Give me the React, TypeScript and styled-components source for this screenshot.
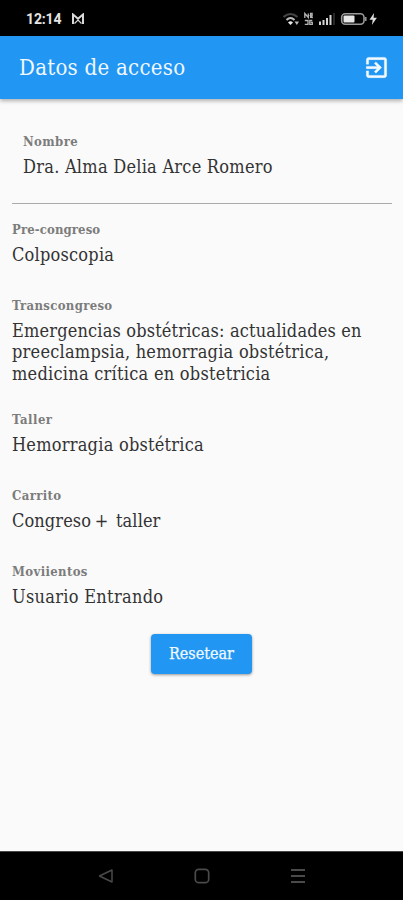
import React from "react";
import styled, { createGlobalStyle } from "styled-components";

const GlobalStyle = createGlobalStyle`
  *, *::before, *::after { box-sizing: border-box; }
  body { margin: 0; background: #fafafa; }
`;

const serif = `"DejaVu Serif Condensed", "DejaVu Serif", serif`;

const Screen = styled.div`
  display: flex;
  flex-direction: column;
  height: 900px;
  overflow: hidden;
  background: #fafafa;
  color: #333;
  font-family: ${serif};
  font-stretch: condensed;
`;

const StatusBar = styled.div`
  display: flex;
  align-items: center;
  justify-content: space-between;
  flex: 0 0 36px;
  padding: 1px 24px 0 26px;
  background: #000;
  color: #e4e4e4;
`;

const Cluster = styled.div<{ $gap: number }>`
  display: flex;
  align-items: center;
  gap: ${(p) => p.$gap}px;
`;

const Clock = styled.span`
  font: 700 14px/18px Roboto, sans-serif;
  letter-spacing: -0.15px;
`;

const AppBar = styled.header`
  display: flex;
  align-items: center;
  justify-content: space-between;
  flex: 0 0 63px;
  padding: 0 13px 0 19px;
  background: #2196f3;
  box-shadow: 0 2px 4px rgba(0, 0, 0, 0.3);
  color: #f1f8ff;
`;

const Title = styled.h1`
  margin: 0;
  padding-top: 1px;
  font-size: 22px;
  font-weight: 400;
  line-height: 28px;
  letter-spacing: 0.27px;
`;

const Content = styled.main`
  display: flex;
  flex-direction: column;
  flex: 1;
  padding: 17px 11px 0 12px;
`;

const Field = styled.section<{ $lead?: boolean }>`
  min-height: ${(p) => (p.$lead ? 87 : 76)}px;
  padding: 16px 0 10px ${(p) => (p.$lead ? 11 : 0)}px;
`;

const Label = styled.div<{ $spacing: number }>`
  padding-top: 1px;
  margin-bottom: 5px;
  color: #7c7c7c;
  font-size: 13px;
  font-weight: 700;
  line-height: 18px;
  letter-spacing: ${(p) => p.$spacing}px;
`;

const Line = styled.div<{ $spacing: number; $word?: number }>`
  font-size: 18px;
  line-height: 21.3px;
  letter-spacing: ${(p) => p.$spacing}px;
  word-spacing: ${(p) => p.$word ?? 0}px;
  white-space: pre;
`;

const Divider = styled.hr`
  width: 100%;
  height: 1px;
  margin: 0;
  border: 0;
  background: #aaa;
`;

const ResetButton = styled.button`
  align-self: center;
  width: 101px;
  height: 40px;
  margin: 12px 1px 0 0;
  padding: 0;
  border: 0;
  border-radius: 4px;
  background: #2196f3;
  box-shadow: 0 1px 3px rgba(0, 0, 0, 0.4);
  color: #f1f8ff;
  font: 400 16px/20px ${serif};
  -webkit-text-stroke: 0.25px #f1f8ff;
`;

const NavBar = styled.nav`
  display: flex;
  justify-content: center;
  align-items: center;
  gap: 80px;
  flex: 0 0 49px;
  border-top: 1px solid #4a4a4a;
  background: #000;
`;

type FieldData = {
  label: string;
  labelSpacing: number;
  lines: { text: string; spacing: number; word?: number }[];
  lead?: boolean;
};

const fields: FieldData[] = [
  { label: "Nombre", labelSpacing: 0.4, lines: [{ text: "Dra. Alma Delia Arce Romero", spacing: 0.25 }], lead: true },
  { label: "Pre-congreso", labelSpacing: 0.12, lines: [{ text: "Colposcopia", spacing: 0.22 }] },
  {
    label: "Transcongreso",
    labelSpacing: 0.33,
    lines: [
      { text: "Emergencias obstétricas: actualidades en", spacing: 0.17 },
      { text: "preeclampsia, hemorragia obstétrica,", spacing: 0.24 },
      { text: "medicina crítica en obstetricia", spacing: 0.26 },
    ],
  },
  { label: "Taller", labelSpacing: 0.5, lines: [{ text: "Hemorragia obstétrica", spacing: 0.24 }] },
  { label: "Carrito", labelSpacing: 0.38, lines: [{ text: "Congreso +  taller", spacing: 0.1, word: -1.5 }] },
  { label: "Moviientos", labelSpacing: 0.36, lines: [{ text: "Usuario Entrando", spacing: 0.3 }] },
];

const GmailIcon = () => (
  <svg width="14" height="12" viewBox="0 0 14 12" fill="none" stroke="#d8d8d8">
    <path d="M2 11V1.500l5 4.300 5-4.300V11" strokeWidth="2" />
    <path d="M3.500 10.500L7 7l3.500 3.500" strokeWidth="1.200" />
  </svg>
);

const StatusIcons = () => (
  <svg width="96" height="16" viewBox="0 0 96 16" fill="none">
    <path d="M.5 6Q7.500 0 14.500 6" stroke="#444" strokeWidth="2" />
    <path d="M3.500 9Q7.500 5 11.500 9" stroke="#bbb" strokeWidth="2" />
    <path d="M5 11.500Q7.500 9 10 11.500L7.500 14z" fill="#e8e8e8" />
    <path d="M11.500 10.500h4.500l-2.200 3.500z" fill="#bbb" />
    <path d="M21.800 7V2.500l3.500 4v-4M27.600 7V2.500h1.500v2.300h-1.500l2 2.200M21.800 9.500h3.200v3.800h-3.200M29.300 9.500h-2.500v3.800h2.500v-2h-1.500" stroke="#b5b5b5" strokeWidth="1.300" />
    <path d="M37 10.500V14M40.500 9v5M44 7v7M47.500 4v10" stroke="#d5d5d5" strokeWidth="2" />
    <path d="M51 2v12" stroke="#262626" strokeWidth="2" />
    <rect x="58.700" y="2.700" width="22.300" height="10.600" rx="3.500" stroke="#9a9a9a" strokeWidth="1.600" />
    <rect x="60.500" y="4.500" width="11" height="7" rx="1" fill="#e6e6e6" />
    <path d="M82.800 6v4" stroke="#999" strokeWidth="1.500" />
    <path d="M91 2l-4.500 6.700h3.200l-.8 5.300 5-7.200h-3.300z" fill="#ddd" />
  </svg>
);

const ExitIcon = () => (
  <svg width="27" height="27" viewBox="0 0 24 24" fill="#f4faff">
    <path d="M10.090 15.590L11.500 17l5-5-5-5-1.410 1.410L12.670 11H3v2h9.670l-2.580 2.590zM19 3H5c-1.110 0-2 .9-2 2v4h2V5h14v14H5v-4H3v4c0 1.100.89 2 2 2h14c1.100 0 2-.9 2-2V5c0-1.100-.9-2-2-2z" stroke="#f4faff" strokeWidth=".4" />
  </svg>
);

const BackIcon = () => (
  <svg width="16" height="16" viewBox="0 0 16 16" fill="none" stroke="#4a4a4a" strokeWidth="1.500" strokeLinejoin="round">
    <path d="M1.500 8L14 2v12z" />
  </svg>
);

const HomeIcon = () => (
  <svg width="16" height="16" viewBox="0 0 16 16" fill="none" stroke="#4a4a4a" strokeWidth="1.700">
    <rect x="1.300" y="1.300" width="13.400" height="13.400" rx="3.500" />
  </svg>
);

const MenuIcon = () => (
  <svg width="16" height="16" viewBox="0 0 16 16" fill="none" stroke="#4a4a4a" strokeWidth="2">
    <path d="M1 2h14M1 8h14M1 14h14" />
  </svg>
);

export default function App() {
  return (
    <Screen>
      <GlobalStyle />
      <StatusBar>
        <Cluster $gap={10}>
          <Clock>12:14</Clock>
          <GmailIcon />
        </Cluster>
        <StatusIcons />
      </StatusBar>
      <AppBar>
        <Title>Datos de acceso</Title>
        <ExitIcon />
      </AppBar>
      <Content>
        {fields.map((f) => (
          <React.Fragment key={f.label}>
            <Field $lead={f.lead}>
              <Label $spacing={f.labelSpacing}>{f.label}</Label>
              {f.lines.map((line) => (
                <Line key={line.text} $spacing={line.spacing} $word={line.word}>
                  {line.text}
                </Line>
              ))}
            </Field>
            {f.lead && <Divider />}
          </React.Fragment>
        ))}
        <ResetButton>Resetear</ResetButton>
      </Content>
      <NavBar>
        <BackIcon />
        <HomeIcon />
        <MenuIcon />
      </NavBar>
    </Screen>
  );
}
